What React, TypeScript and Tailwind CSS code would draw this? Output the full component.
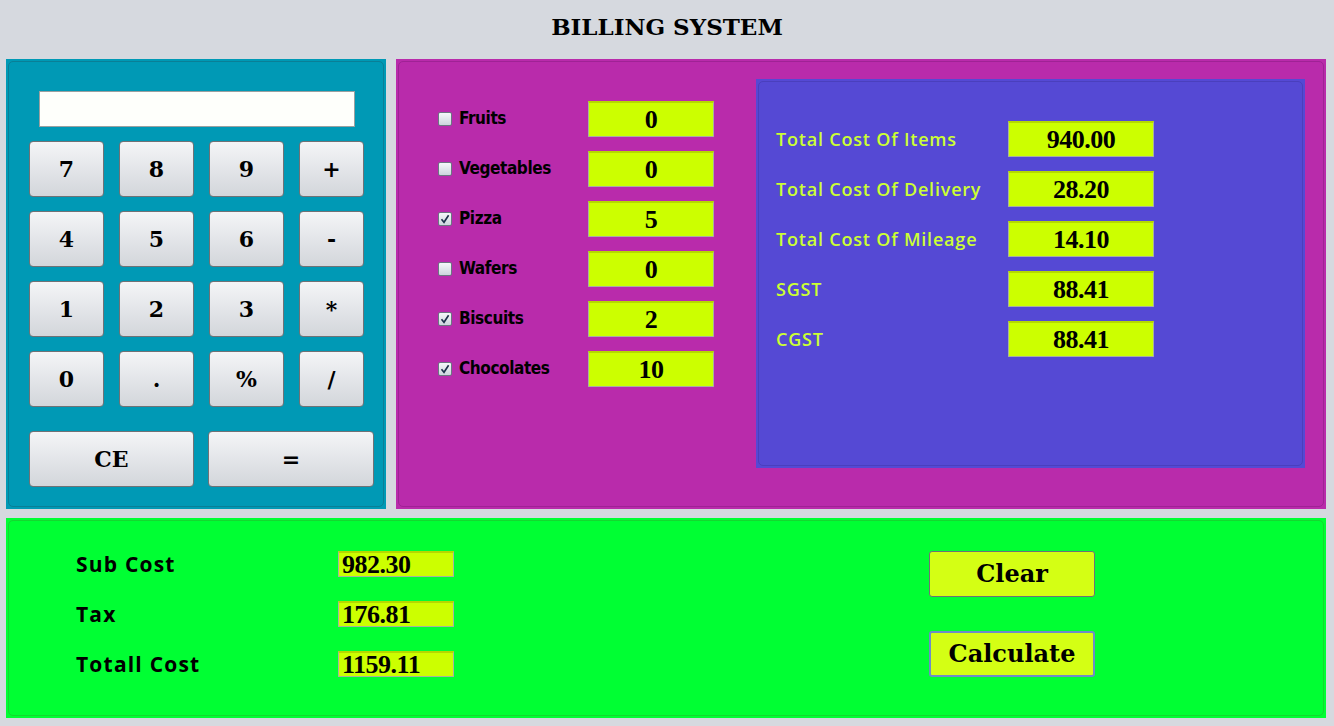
import React from 'react';

const KEYS = [
  [
    { k: '7', w: 'w-[75px]' },
    { k: '8', w: 'w-[75px]' },
    { k: '9', w: 'w-[75px]' },
    { k: '+', w: 'w-[65px]' },
  ],
  [
    { k: '4', w: 'w-[75px]' },
    { k: '5', w: 'w-[75px]' },
    { k: '6', w: 'w-[75px]' },
    { k: '-', w: 'w-[65px]' },
  ],
  [
    { k: '1', w: 'w-[75px]' },
    { k: '2', w: 'w-[75px]' },
    { k: '3', w: 'w-[75px]' },
    { k: '*', w: 'w-[65px]' },
  ],
  [
    { k: '0', w: 'w-[75px]' },
    { k: '.', w: 'w-[75px]' },
    { k: '%', w: 'w-[75px]' },
    { k: '/', w: 'w-[65px]' },
  ],
];

const ITEMS = [
  { name: 'Fruits', qty: '0', checked: false },
  { name: 'Vegetables', qty: '0', checked: false },
  { name: 'Pizza', qty: '5', checked: true },
  { name: 'Wafers', qty: '0', checked: false },
  { name: 'Biscuits', qty: '2', checked: true },
  { name: 'Chocolates', qty: '10', checked: true },
];

const COSTS = [
  { label: 'Total Cost Of Items', value: '940.00' },
  { label: 'Total Cost Of Delivery', value: '28.20' },
  { label: 'Total Cost Of Mileage', value: '14.10' },
  { label: 'SGST', value: '88.41' },
  { label: 'CGST', value: '88.41' },
];

const TOTALS = [
  { label: 'Sub Cost', value: '982.30' },
  { label: 'Tax', value: '176.81' },
  { label: 'Totall Cost', value: '1159.11' },
];

const serif = "font-['Liberation_Serif',serif]";
const keyFont = "font-['DejaVu_Serif',serif]";
const label = "font-['DejaVu_Sans_Condensed','DejaVu_Sans',sans-serif]";

function Key({ k, w }: { k: string; w: string }) {
  return (
    <div
      className={`${w} h-[56px] rounded-[4px] border border-[#6f7276] bg-gradient-to-b from-[#f4f5f7] to-[#d3d6db] flex items-center justify-center text-[22px] font-bold text-black ${keyFont}`}
    >
      {k}
    </div>
  );
}

function Check({ on }: { on: boolean }) {
  return (
    <span className="w-[14px] h-[14px] rounded-[2px] border border-[#6c7683] bg-gradient-to-b from-[#f6f8fa] to-[#cdd5de] flex items-center justify-center shrink-0">
      {on && (
        <svg width="10" height="10" viewBox="0 0 10 10">
          <path d="M1.5 5.2 L4 8.3 L8.6 1.2" fill="none" stroke="#1d2f4a" strokeWidth="1.6" />
        </svg>
      )}
    </span>
  );
}

function Field({ value, cls }: { value: string; cls: string }) {
  return (
    <div
      className={`${cls} bg-[#ccff00] border border-[#a8b0a0] border-t-2 border-t-[#b6d800] font-bold text-black leading-none flex items-center tracking-[-0.5px] ${serif}`}
    >
      {value}
    </div>
  );
}

export default function App() {
  return (
    <div className="w-[1334px] h-[726px] bg-[#d6d9df] flex flex-col overflow-hidden">
      <div className="h-[59px] flex items-center justify-center pb-[4px]">
        <h1 className={`text-[23px] font-bold text-black ${keyFont}`}>BILLING SYSTEM</h1>
      </div>

      <div className="flex gap-[10px] pl-[6px]">
        {/* calculator */}
        <div className="w-[380px] h-[450px] bg-[#0099b5] p-[2px]">
          <div className="h-full rounded-[5px] border border-[#0a7f96] pt-[29px] pl-[20px]">
            <div className="ml-[10px] w-[316px] h-[36px] bg-[#fefffb] border border-[#9aa0a0]" />
            <div className="mt-[14px] flex flex-col gap-[14px]">
              {KEYS.map((row, i) => (
                <div key={i} className="flex gap-[15px]">
                  {row.map((key) => (
                    <Key key={key.k} k={key.k} w={key.w} />
                  ))}
                </div>
              ))}
            </div>
            <div className="mt-[24px] flex gap-[14px]">
              <Key k="CE" w="w-[165px]" />
              <Key k="=" w="w-[166px]" />
            </div>
          </div>
        </div>

        {/* items */}
        <div className="w-[930px] h-[450px] bg-[#b92bab] p-[2px]">
          <div className="h-full rounded-[5px] border border-[#9f2295] flex">
            <div className="pt-[39px] pl-[39px] w-[357px] flex flex-col gap-[14px]">
              {ITEMS.map((it) => (
                <div key={it.name} className="flex items-center h-[36px]">
                  <Check on={it.checked} />
                  <span className={`ml-[7px] w-[129px] text-[17px] font-bold text-black tracking-[-0.4px] ${label}`}>{it.name}</span>
                  <Field value={it.qty} cls="w-[126px] h-[36px] justify-center text-[26px]" />
                </div>
              ))}
            </div>
            <div className="mt-[17px] w-[549px] h-[389px] bg-[#5549d4] p-[2px]">
              <div className="h-full rounded-[5px] border border-[#4a3fbd] pt-[39px] pl-[17px] flex flex-col gap-[14px]">
                {COSTS.map((c) => (
                  <div key={c.label} className="flex items-center h-[36px]">
                    <span className="w-[232px] text-[18px] font-semibold text-[#ccff33] font-['Open_Sans',sans-serif] tracking-[0.8px]">
                      {c.label}
                    </span>
                    <Field value={c.value} cls="w-[146px] h-[36px] justify-center text-[26px]" />
                  </div>
                ))}
              </div>
            </div>
          </div>
        </div>
      </div>

      {/* totals */}
      <div className="mt-[9px] ml-[6px] w-[1320px] h-[200px] bg-[#00ff33] p-[2px]">
        <div className="h-full rounded-[5px] border border-[#14d830] flex">
          <div className="pt-[30px] pl-[67px] w-[920px] flex flex-col gap-[24px]">
            {TOTALS.map((t) => (
              <div key={t.label} className="flex items-center h-[26px]">
                <span className="w-[262px] text-[21px] font-bold text-black font-['Open_Sans',sans-serif] tracking-[1.2px] pt-[2px]">{t.label}</span>
                <Field value={t.value} cls="w-[116px] h-[26px] pl-[3px] text-[26px]" />
              </div>
            ))}
          </div>
          <div className="pt-[30px] flex flex-col gap-[34px]">
            <div className={`w-[166px] h-[46px] rounded-[3px] border border-[#6f7276] bg-[#d4ff14] flex items-center justify-center text-[24px] font-bold text-black ${keyFont}`}>
              Clear
            </div>
            <div className={`w-[166px] h-[46px] rounded-[3px] border-2 border-[#6e8cc8] bg-[#d4ff14] flex items-center justify-center text-[24px] font-bold text-black ${keyFont}`}>
              Calculate
            </div>
          </div>
        </div>
      </div>
    </div>
  );
}
